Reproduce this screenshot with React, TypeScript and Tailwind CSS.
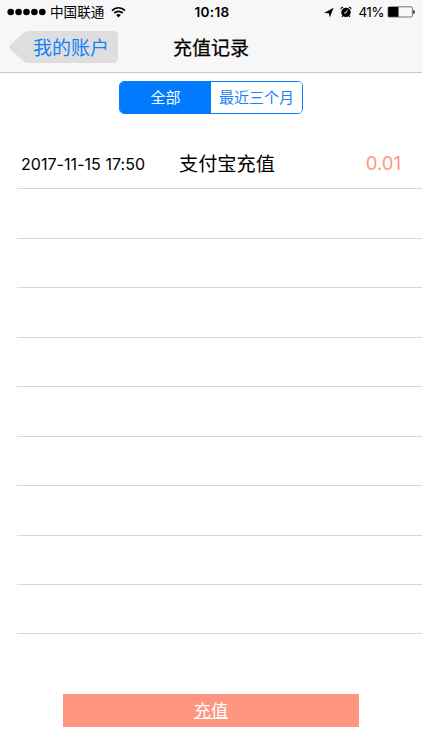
import { useState } from 'react';

type RechargeRecord = { time: string; method: string; amount: string };

const RECORDS: RechargeRecord[] = [
  { time: '2017-11-15 17:50', method: '支付宝充值', amount: '0.01' },
];

const TABS = ['全部', '最近三个月'];
const ROW_COUNT = 10;

function StatusBar() {
  return (
    <div className="relative flex h-6 items-center justify-between pl-[7px] pr-[6px] text-black">
      <div className="flex items-center">
        <svg width="39" height="8" viewBox="0 0 39 8" fill="currentColor">
          {[0, 1, 2, 3, 4].map((i) => (
            <circle key={i} cx={3.7 + i * 7.9} cy="4" r="3.3" />
          ))}
        </svg>
        <span className="ml-1 text-[13.6px] leading-6">中国联通</span>
        <svg className="ml-[7px]" width="15" height="12" viewBox="0 0 15 12" fill="none" stroke="currentColor" strokeWidth="1.7">
          <path d="M1 4.6C4.6.8 10.4.8 14 4.6" />
          <path d="M3.3 7.2c2.4-2.5 6-2.5 8.4 0" />
          <path d="M7.5 11.4 5.2 9c1.3-1.2 3.3-1.2 4.6 0z" fill="currentColor" stroke="none" />
        </svg>
      </div>

      <span className="absolute left-[194.5px] text-[13.6px] font-semibold leading-6 tracking-[0.3px]">10:18</span>

      <div className="flex items-center">
        <svg width="11" height="11" viewBox="0 0 11 11" fill="currentColor">
          <path d="M10.6.8 6.8 10.600 5.900 6.200 1 5.900z" />
        </svg>
        <svg className="ml-[6px]" width="12" height="12" viewBox="0 0 12 12">
          <path d="M.7 3.5A2 2 0 0 1 3.6 1zM11.3 3.5A2 2 0 0 0 8.4 1z" fill="currentColor" />
          <circle cx="6" cy="6.4" r="4.7" fill="currentColor" />
          <path d="m3 9.700-1 1.300M9 9.700l1 1.300" stroke="currentColor" strokeWidth="1.1" />
          <path d="M4 7.200 6.200 6.600 7.300 4.200" fill="none" stroke="#f7f7f7" strokeWidth="1" />
        </svg>
        <span className="ml-[6px] text-[13.6px] leading-6 tracking-[-0.6px]">41%</span>
        <svg className="ml-[3px]" width="29" height="12" viewBox="0 0 29 12">
          <rect x="1" y=".8" width="24.4" height="10.2" rx="1.3" fill="none" stroke="#555" strokeWidth=".8" />
          <rect x="1.2" y="1" width="10.3" height="9.8" fill="#000" />
          <path d="M26.3 4c2 .3 2 3.6 0 3.9z" fill="#000" />
        </svg>
      </div>
    </div>
  );
}

function NavBar() {
  return (
    <div className="relative flex h-12 items-start pl-[9px] pt-[7px]">
      <button className="relative h-8 w-[109px] text-[#167efb]">
        <svg className="absolute inset-0" width="109" height="32" viewBox="0 0 109 32" fill="#dedede">
          <path d="M.7 14.4 14.8 1.5Q16.6 0 19 0h85.5Q109 0 109 4.5v23Q109 32 104.5 32H19q-2.4 0-4.2-1.5L.7 17.6Q-.6 16 .7 14.4z" />
        </svg>
        <span className="relative block whitespace-nowrap pl-6 pt-0.5 text-left text-[19px] leading-8">我的账户</span>
      </button>
      <h1 className="absolute left-1/2 top-[9px] -translate-x-1/2 whitespace-nowrap text-[19px] font-normal leading-8 text-black [-webkit-text-stroke:0.25px_black]">
        充值记录
      </h1>
    </div>
  );
}

export default function App() {
  const [tab, setTab] = useState(0);

  return (
    <div className="flex h-[750px] w-[422px] flex-col overflow-hidden bg-white font-['Inter','Noto_Sans_CJK_SC',sans-serif]">
      <header className="h-[73px] shrink-0 border-b border-[#c9c9c9] bg-[#f7f7f7]">
        <StatusBar />
        <NavBar />
      </header>

      <div className="mx-auto mt-2 flex h-[33px] w-[184px] shrink-0 overflow-hidden rounded-[5px] border border-[#0a7cff]">
        {TABS.map((label, i) => (
          <button
            key={label}
            onClick={() => setTab(i)}
            className={`w-1/2 whitespace-nowrap text-[15px] leading-[32px] ${
              tab === i ? 'bg-[#007aff] text-white' : 'bg-white text-[#1a82fa]'
            }`}
          >
            {label}
          </button>
        ))}
      </div>

      <ul className="mt-[26px] shrink-0 pl-[17px]">
        {Array.from({ length: ROW_COUNT }, (_, i) => {
          const record = RECORDS[i];
          return (
            <li key={i} className="flex h-[49.45px] items-center border-b border-[#d8d8da] text-black">
              {record && (
                <>
                  <span className="w-[162px] shrink-0 whitespace-nowrap pl-1 text-[16px] tracking-[0.05px]">{record.time}</span>
                  <span className="pt-px text-[19.2px]">{record.method}</span>
                  <span className="ml-auto pr-[21px] text-[18.5px] text-[#fb9787]">{record.amount}</span>
                </>
              )}
            </li>
          );
        })}
      </ul>

      <button className="mx-auto mt-[60px] h-[33px] w-[296px] shrink-0 bg-[#ff9681] text-[17px] leading-[34px] text-white underline">
        充值
      </button>
    </div>
  );
}
